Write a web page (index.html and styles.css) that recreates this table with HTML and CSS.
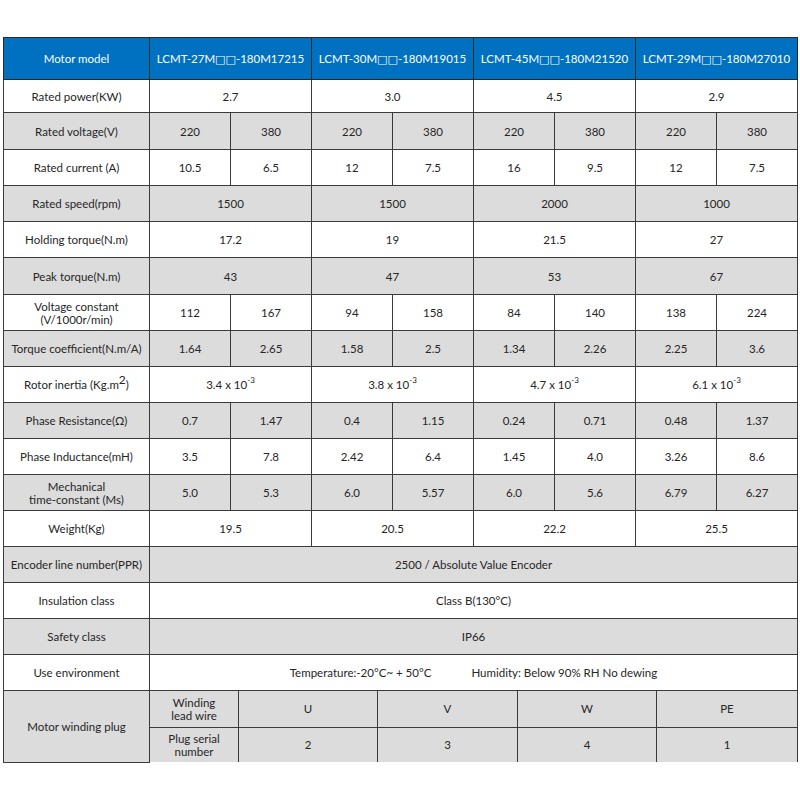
FILE: index.html
```html
<!DOCTYPE html>
<html>
<head>
<meta charset="utf-8">
<link rel="stylesheet" href="styles.css">
</head>
<body>
<div class="sheet">
<table class="spec">
<colgroup>
<col class="c-label"><col class="c-sub"><col class="c-sub"><col class="c-sub"><col class="c-sub"><col class="c-sub"><col class="c-sub"><col class="c-sub"><col class="c-sub">
</colgroup>
<tr class="head h42">
<td>Motor model</td>
<td colspan="2">LCMT-27M<span class="sq">□□</span>-180M17215</td>
<td colspan="2">LCMT-30M<span class="sq">□□</span>-180M19015</td>
<td colspan="2">LCMT-45M<span class="sq">□□</span>-180M21520</td>
<td colspan="2">LCMT-29M<span class="sq">□□</span>-180M27010</td>
</tr>
<tr class="w h33"><td>Rated power(KW)</td><td colspan="2">2.7</td><td colspan="2">3.0</td><td colspan="2">4.5</td><td colspan="2">2.9</td></tr>
<tr class="g h37"><td>Rated voltage(V)</td><td>220</td><td>380</td><td>220</td><td>380</td><td>220</td><td>380</td><td>220</td><td>380</td></tr>
<tr class="w h36"><td>Rated current (A)</td><td>10.5</td><td>6.5</td><td>12</td><td>7.5</td><td>16</td><td>9.5</td><td>12</td><td>7.5</td></tr>
<tr class="g h36"><td>Rated speed(rpm)</td><td colspan="2">1500</td><td colspan="2">1500</td><td colspan="2">2000</td><td colspan="2">1000</td></tr>
<tr class="w h36"><td>Holding torque(N.m)</td><td colspan="2">17.2</td><td colspan="2">19</td><td colspan="2">21.5</td><td colspan="2">27</td></tr>
<tr class="g h37"><td>Peak torque(N.m)</td><td colspan="2">43</td><td colspan="2">47</td><td colspan="2">53</td><td colspan="2">67</td></tr>
<tr class="w h36"><td class="two">Voltage constant<br>(V/1000r/min)</td><td>112</td><td>167</td><td>94</td><td>158</td><td>84</td><td>140</td><td>138</td><td>224</td></tr>
<tr class="g h36"><td>Torque coefficient(N.m/A)</td><td>1.64</td><td>2.65</td><td>1.58</td><td>2.5</td><td>1.34</td><td>2.26</td><td>2.25</td><td>3.6</td></tr>
<tr class="w h36"><td>Rotor inertia (Kg.m<sup class="big">2</sup>)</td><td colspan="2">3.4 x 10<sup>-3</sup></td><td colspan="2">3.8 x 10<sup>-3</sup></td><td colspan="2">4.7 x 10<sup>-3</sup></td><td colspan="2">6.1 x 10<sup>-3</sup></td></tr>
<tr class="g h36"><td>Phase Resistance(Ω)</td><td>0.7</td><td>1.47</td><td>0.4</td><td>1.15</td><td>0.24</td><td>0.71</td><td>0.48</td><td>1.37</td></tr>
<tr class="w h36"><td>Phase Inductance(mH)</td><td>3.5</td><td>7.8</td><td>2.42</td><td>6.4</td><td>1.45</td><td>4.0</td><td>3.26</td><td>8.6</td></tr>
<tr class="g h36"><td class="two">Mechanical<br>time-constant (Ms)</td><td>5.0</td><td>5.3</td><td>6.0</td><td>5.57</td><td>6.0</td><td>5.6</td><td>6.79</td><td>6.27</td></tr>
<tr class="w h36"><td>Weight(Kg)</td><td colspan="2">19.5</td><td colspan="2">20.5</td><td colspan="2">22.2</td><td colspan="2">25.5</td></tr>
<tr class="g h36"><td>Encoder line number(PPR)</td><td colspan="8">2500 / Absolute Value Encoder</td></tr>
<tr class="w h36"><td>Insulation class</td><td colspan="8">Class B(130°C)</td></tr>
<tr class="g h36"><td>Safety class</td><td colspan="8">IP66</td></tr>
<tr class="w h36"><td>Use environment</td><td colspan="8"><span class="env-a">Temperature:-20°C~ + 50°C</span><span class="env-b">Humidity: Below 90% RH No dewing</span></td></tr>
</table>
<table class="spec plug">
<colgroup>
<col class="p-label"><col class="p-sub"><col class="p-u"><col class="p-v"><col class="p-w"><col class="p-pe">
</colgroup>
<tr class="g h36"><td rowspan="2">Motor winding plug</td><td class="two">Winding<br>lead wire</td><td>U</td><td>V</td><td>W</td><td>PE</td></tr>
<tr class="g h35"><td class="two">Plug serial<br>number</td><td>2</td><td>3</td><td>4</td><td>1</td></tr>
</table>
</div>
</body>
</html>
```
FILE: styles.css
```css
html, body {
  margin: 0;
  padding: 0;
  background: #ffffff;
}
.sheet {
  padding: 37px 0 0 3px;
  width: 794px;
}
.spec {
  width: 794px;
  border-collapse: collapse;
  table-layout: fixed;
  font-family: Lato, "Open Sans", "Liberation Sans", sans-serif;
  font-size: 11.5px;
  color: #262626;
}
.spec td {
  border: 1px solid #3a3a3a;
  text-align: center;
  vertical-align: middle;
  padding: 0;
  line-height: 13px;
}
.c-label { width: 146px; }
.c-sub { width: 81px; }
.head td {
  background: #0070c0;
  color: #ffffff;
  border-color: #2a2a2a;
}
.sq {
  font-family: "DejaVu Sans", sans-serif;
  font-size: 11px;
  line-height: 0;
  letter-spacing: 0;
}
.w td { background: #ffffff; }
.g td { background: #dcdcdc; }
.h42 { height: 42px; }
.h37 { height: 37px; }
.h36 { height: 36px; }
.h35 { height: 35px; }
.h33 { height: 33px; }
.two { line-height: 13px; }
sup {
  font-size: 8px;
  line-height: 0;
  vertical-align: 6px;
}
sup.big {
  font-size: 12px;
  vertical-align: 5px;
}
.env-a { margin-right: 40px; }
.plug td { border-top: none; }
.plug tr:last-child td { border-bottom: none; }
.p-label { width: 146px; }
.p-sub { width: 89px; }
.p-u { width: 139px; }
.p-v { width: 140px; }
.p-w { width: 139px; }
.p-pe { width: 141px; }
```
